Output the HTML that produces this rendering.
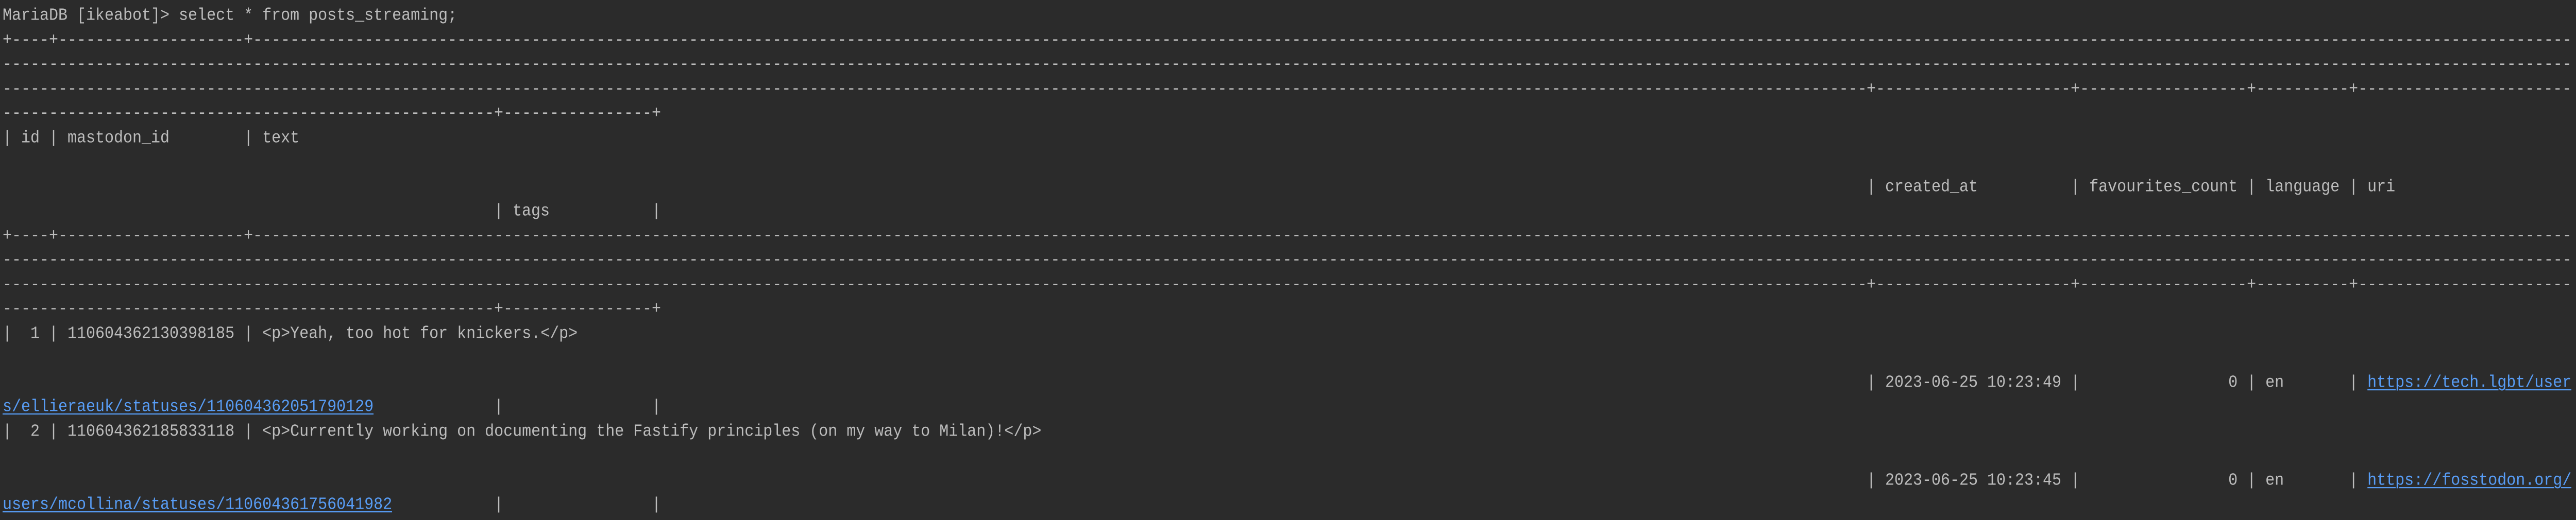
<!DOCTYPE html>
<html><head><meta charset="utf-8"><style>
html,body{margin:0;padding:0;background:#2b2b2b;}
body{width:5036px;height:1010px;position:relative;overflow:hidden;}
.l{position:absolute;left:0;height:47.5px;line-height:47.5px;width:5036px;}
.s{position:absolute;top:0;white-space:pre;font-family:"Liberation Mono",monospace;font-size:30px;color:#bcbcbc;overflow:hidden;height:47.5px;transform:scaleY(1.1);transform-origin:0 50%;}
a{color:#589df6;text-decoration:underline;text-decoration-thickness:2px;text-underline-offset:4px;}
.sb{position:absolute;left:5012px;top:858px;width:16px;height:44px;border-radius:8px;background:#4c4c4c;}
</style></head><body>
<div class="l" style="top:8px"><span class="s" style="left:5px">MariaDB [ikeabot]&gt; select * from posts_streaming;</span></div>

<div class="l" style="top:55.5px"><span class="s" style="left:5px">+----+--------------------+</span><span class="s" style="left:491px;width:4500px">----------------------------------------------------------------------------------------------------------------------------------------------------------------------------------------------------------------------------------------------------------------------------------------------------------</span></div>
<div class="l" style="top:103px"><span class="s" style="left:5px;width:4986px">------------------------------------------------------------------------------------------------------------------------------------------------------------------------------------------------------------------------------------------------------------------------------------------------------------------</span></div>
<div class="l" style="top:150.5px"><span class="s" style="left:5px;width:3618px">----------------------------------------------------------------------------------------------------------------------------------------------------------------------------------------------------------------------------------------</span><span class="s" style="left:3623px">+---------------------+------------------+----------+-----------------------</span></div>
<div class="l" style="top:198px"><span class="s" style="left:5px;width:954px">--------------------------------------------------------------------</span><span class="s" style="left:959px">+----------------+</span></div>
<div class="l" style="top:245.5px"><span class="s" style="left:5px">| id | mastodon_id        | text</span></div>
<div class="l" style="top:340.5px"><span class="s" style="left:3623px">| created_at          | favourites_count | language | uri</span></div>
<div class="l" style="top:388px"><span class="s" style="left:959px">| tags           |</span></div>

<div class="l" style="top:435.5px"><span class="s" style="left:5px">+----+--------------------+</span><span class="s" style="left:491px;width:4500px">----------------------------------------------------------------------------------------------------------------------------------------------------------------------------------------------------------------------------------------------------------------------------------------------------------</span></div>
<div class="l" style="top:483px"><span class="s" style="left:5px;width:4986px">------------------------------------------------------------------------------------------------------------------------------------------------------------------------------------------------------------------------------------------------------------------------------------------------------------------</span></div>
<div class="l" style="top:530.5px"><span class="s" style="left:5px;width:3618px">----------------------------------------------------------------------------------------------------------------------------------------------------------------------------------------------------------------------------------------</span><span class="s" style="left:3623px">+---------------------+------------------+----------+-----------------------</span></div>
<div class="l" style="top:578px"><span class="s" style="left:5px;width:954px">--------------------------------------------------------------------</span><span class="s" style="left:959px">+----------------+</span></div>

<div class="l" style="top:625.5px"><span class="s" style="left:5px">|  1 | 110604362130398185 | &lt;p&gt;Yeah, too hot for knickers.&lt;/p&gt;</span></div>
<div class="l" style="top:720.5px"><span class="s" style="left:3623px">| 2023-06-25 10:23:49 |                0 | en       | <a>https://tech.lgbt/user</a></span></div>
<div class="l" style="top:768px"><span class="s" style="left:5px"><a>s/ellieraeuk/statuses/110604362051790129</a></span><span class="s" style="left:959px">|</span><span class="s" style="left:1265px">|</span></div>
<div class="l" style="top:815.5px"><span class="s" style="left:5px">|  2 | 110604362185833118 | &lt;p&gt;Currently working on documenting the Fastify principles (on my way to Milan)!&lt;/p&gt;</span></div>
<div class="l" style="top:910.5px"><span class="s" style="left:3623px">| 2023-06-25 10:23:45 |                0 | en       | <a>https://fosstodon.org/</a></span></div>
<div class="l" style="top:958px"><span class="s" style="left:5px"><a>users/mcollina/statuses/110604361756041982</a></span><span class="s" style="left:959px">|</span><span class="s" style="left:1265px">|</span></div>

<div class="sb"></div>
</body></html>
